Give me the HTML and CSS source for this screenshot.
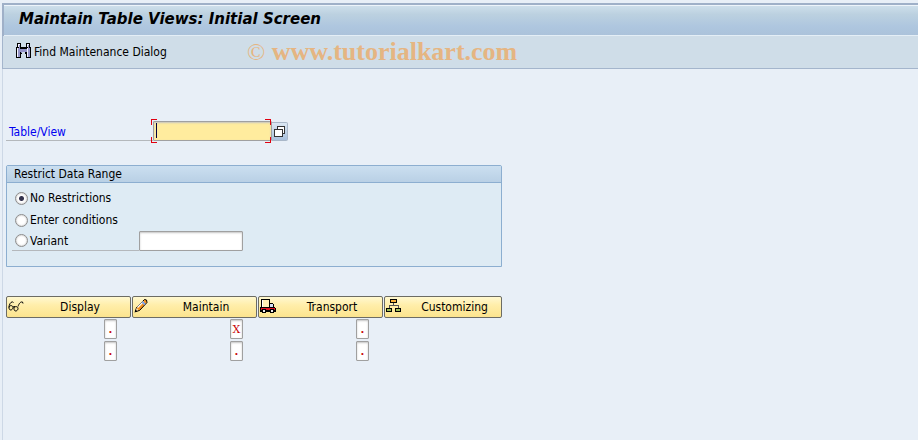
FILE: index.html
```html
<!DOCTYPE html>
<html lang="en">
<head>
<meta charset="utf-8">
<title>Maintain Table Views: Initial Screen</title>
<link rel="stylesheet" href="styles.css">
</head>
<body>
<div class="window">
  <header class="titlebar"><h1>Maintain Table Views: Initial Screen</h1></header>
  <div class="toolbar">
    <button class="tool" type="button">
      <svg width="16" height="16" viewBox="0 0 16 16" shape-rendering="crispEdges" aria-hidden="true">
        <path fill="#000" d="M1 0h4v4h5V0h4v4h1v11h-5v-4H9V9H6v2H5v4H0V4h1z"/>
        <path fill="#f4f4ff" d="M2 1h2v3H2zM11 1h2v3h-2zM1 5h1v9H1zM11 5h1v9h-1z"/>
        <path fill="#9494c8" d="M2 5h2v9H2zM12 5h2v9h-2zM4 6h7v3H4zM3 2h1v3H3zM12 2h1v3h-1zM5 9h1v1H5z"/>
      </svg>
      <span>Find Maintenance Dialog</span>
    </button>
    <span class="watermark"><span class="mark">©</span> www.tutorialkart.com</span>
  </div>
  <main class="content">
    <form class="form">
      <div class="field-row">
        <label class="field-label" for="table">Table/View</label>
        <span class="focus">
          <input class="table-input" id="table" type="text">
          <span class="caret"></span>
          <svg class="corners" width="121" height="24" viewBox="0 0 121 24" shape-rendering="crispEdges" aria-hidden="true"><path fill="#e00010" d="M0 0h6v1H1v5H0zM114 0h6v6h-1V1h-5zM119 18h1v6h-6v-1h5zM0 18h1v5h5v1H0z"/></svg>
        </span>
        <button class="help" type="button" aria-label="Possible entries">
          <svg width="12" height="12" viewBox="0 0 12 12" shape-rendering="crispEdges" aria-hidden="true"><path fill="#333" d="M3 0h8v8H3z"/><path fill="#fff" d="M4 1h6v6H4z"/><path fill="#333" d="M0 3h9v8H0z"/><path fill="#fff" d="M1 4h7v6H1z"/></svg>
        </button>
      </div>
      <fieldset class="group">
        <legend class="group-title">Restrict Data Range</legend>
        <div class="options">
          <label class="option"><input type="radio" name="range" checked><span>No Restrictions</span></label>
          <label class="option"><input type="radio" name="range"><span>Enter conditions</span></label>
          <div class="variant-row">
            <label class="option variant"><input type="radio" name="range"><span>Variant</span></label>
            <input class="variant-input" type="text" aria-label="Variant name">
          </div>
        </div>
      </fieldset>
      <div class="actions">
        <div class="action">
          <button class="push" type="button">
            <svg width="16" height="16" viewBox="0 0 16 16" aria-hidden="true"><path fill="none" stroke="#000" d="M1 9.500C1 6 3.500 2.500 5.500 4.500M10 8.500c1-3 2.500-5 4.500-4.500l.5 1.500M1 9.500c0-2.500 4-2.500 4 0s-4 4-4 0zM6 10.500c0-2.500 4-2.500 4 0s-4 4-4 0zM5 9l2-.5"/></svg>
            <span>Display</span>
          </button>
          <input class="flag" type="text" value="." aria-label="Display flag 1">
          <input class="flag" type="text" value="." aria-label="Display flag 2">
        </div>
        <div class="action">
          <button class="push" type="button">
            <svg width="16" height="16" viewBox="0 0 16 16" aria-hidden="true"><path fill="#f79420" stroke="#000" d="M1.500 13.500l1-4L9 3l1.500-1.500 2 .5.500 2.500-7.500 8z"/><path stroke="#fff" stroke-width="1.500" d="M3.500 9.500L9.500 3.500"/><path stroke="#7fa4e8" stroke-width="2" d="M8.500 4l2.500 2.500"/><path fill="#ffe9c0" d="M2.500 10l2 2-2.500 1z"/><path d="M.5 14.500l1-3 2 2z"/></svg>
            <span>Maintain</span>
          </button>
          <input class="flag" type="text" value="X" aria-label="Maintain flag 1">
          <input class="flag" type="text" value="." aria-label="Maintain flag 2">
        </div>
        <div class="action">
          <button class="push" type="button">
            <svg width="16" height="16" viewBox="0 0 16 16" shape-rendering="crispEdges" aria-hidden="true"><path fill="#000" d="M1 1h9v4h3v1h1v3h1v1h1v4H0V9h1z"/><path fill="#ffefb5" d="M2 2h7v7H2z"/><path fill="#fff" d="M2 2h1v7H2z"/><path fill="#d4e0f4" d="M10 6h3v3h-3z"/><path fill="#e01020" d="M1 10h14v2H1z"/><path fill="#000" d="M2 11h4v4H2zM10 11h4v4h-4z"/><path fill="#eee" d="M3 12h2v2H3zM11 12h2v2h-2z"/></svg>
            <span>Transport</span>
          </button>
          <input class="flag" type="text" value="." aria-label="Transport flag 1">
          <input class="flag" type="text" value="." aria-label="Transport flag 2">
        </div>
        <div class="action">
          <button class="push" type="button">
            <svg width="16" height="16" viewBox="0 0 16 16" shape-rendering="crispEdges" aria-hidden="true"><path fill="#555" d="M7 4h1v4H7zM3 7h10v3h-1V8H4v2H3z"/><path fill="#000" d="M4 1h7v4H4zM0 10h6v4H0zM9 10h6v4H9z"/><path fill="#f7b03b" d="M5 2h5v2H5z"/><path fill="#9cbd5a" d="M1 11h4v2H1zM10 11h4v2h-4z"/></svg>
            <span>Customizing</span>
          </button>
        </div>
      </div>
    </form>
  </main>
</div>
</body>
</html>
```
FILE: styles.css
```css
* { box-sizing: border-box; }

body {
  margin: 0;
  background: #e8eff7;
  color: #000;
  font: 12px/16px "DejaVu Sans Condensed", "Noto Sans", sans-serif;
}

button, input { font: inherit; color: inherit; }

.window {
  min-height: 100vh;
  padding: 3px 0 0 2px;
}

.titlebar {
  height: 33px;
  padding: 0 15px;
  border: solid #9fb0c8;
  border-width: 2px 0 0 2px;
  background: linear-gradient(#cfe0ec, #bcd1e0 30%, #aec6df 70%, #abc2da);
  box-shadow: inset 0 1px #edf4fa, inset 0 -1px #e4eef6;
}

h1 {
  margin: 0;
  font-family: "DejaVu Sans", sans-serif;
  font-size: 15px;
  line-height: 28px;
  font-style: italic;
  font-weight: bold;
}

.toolbar {
  position: relative;
  display: flex;
  align-items: center;
  height: 33px;
  padding-left: 13px;
  border: solid #a4b5cc;
  border-width: 0 0 1px 1px;
  background: #cfdde8;
}

.tool {
  display: flex;
  align-items: center;
  gap: 2px;
  padding: 0;
  border: 0;
  background: none;
}

.tool svg { margin-bottom: 2px; }

.watermark {
  position: absolute;
  left: 244px;
  top: 0;
  color: #e5b582;
  font: bold 26px/32px "Liberation Serif", serif;
  white-space: nowrap;
}

.mark { font-size: 24px; font-weight: normal; }

.content {
  min-height: calc(100vh - 69px);
  padding: 50px 4px 0 3px;
  border-left: 1px solid #cdd8e6;
}

.form { max-width: 496px; }

.field-row { display: flex; align-items: flex-end; }

.field-label {
  width: 147px;
  padding: 3px 3px 0;
  border-bottom: 1px solid #b4b8bc;
  color: #0000f0;
}

.focus { position: relative; width: 119px; height: 22px; }

input[type="text"] {
  display: block;
  border: 1px solid #a0a0a0;
  border-radius: 1px;
  background: #fff;
  box-shadow: inset 0 1px 2px #c4c4c4;
  outline: 0;
}

input.table-input[type="text"] {
  width: 100%;
  height: 20px;
  margin-top: 2px;
  padding: 0 3px;
  background: #ffec9e;
}

.corners { position: absolute; left: -2px; top: 0; overflow: visible; }

.caret { position: absolute; left: 3px; top: 4px; width: 1px; height: 15px; background: #000040; }

.help {
  display: grid;
  place-items: center;
  width: 16px;
  height: 19px;
  padding: 0;
  border: solid #a9b7c8;
  border-width: 1px 1px 1px 0;
  border-radius: 0 2px 2px 0;
  background: linear-gradient(#dce8f4, #a9c0dc);
}

.group {
  margin: 24px 0 29px;
  padding: 0;
  border: 1px solid #8caed0;
  border-radius: 2px 2px 0 0;
  background: #deebf4;
}

.group-title {
  float: left;
  width: 100%;
  padding: 0 7px;
  border-bottom: 1px solid #8caed0;
  background: linear-gradient(#cbdff0, #b9d0e5);
}

.options { clear: both; padding: 4px 5px 15px; }

.option { display: flex; align-items: center; gap: 2px; height: 22px; padding-left: 3px; }

input[type="radio"] {
  appearance: none;
  width: 13px;
  height: 13px;
  margin: 0;
  border: 1px solid #8c8c8c;
  border-radius: 50%;
  background: #fff;
  box-shadow: inset 0 0 2px #aaa;
}

input[type="radio"]:checked { background: radial-gradient(circle, #33334d 2px, #fff 3px); }

.variant-row { display: flex; align-items: flex-end; }

.variant { width: 127px; height: 20px; border-bottom: 1px solid #b4b8bc; }

.variant-input { width: 104px; height: 20px; }

.actions {
  display: grid;
  grid-template-columns: 125px 125px 125px 118px;
  gap: 1px;
}

.action { display: flex; flex-direction: column; gap: 2px; }

.push {
  display: flex;
  align-items: center;
  height: 22px;
  padding: 0 4px 0 1px;
  border: 1px solid #6c6c64;
  border-radius: 2px;
  background: linear-gradient(#fff8d0, #ffeeaa 40%, #fce48e);
}

.push svg { flex: none; margin-bottom: 2px; }

.push span { flex: 1; padding-left: 10px; text-align: center; }

.flag {
  width: 13px;
  height: 20px;
  margin-left: 98px;
  padding: 0;
  color: #c80000;
  font-family: "DejaVu Serif", serif;
  font-size: 11px;
  text-align: center;
}

.flag[value="."] { font-weight: bold; }

.push + .flag { margin-top: -1px; }
```
